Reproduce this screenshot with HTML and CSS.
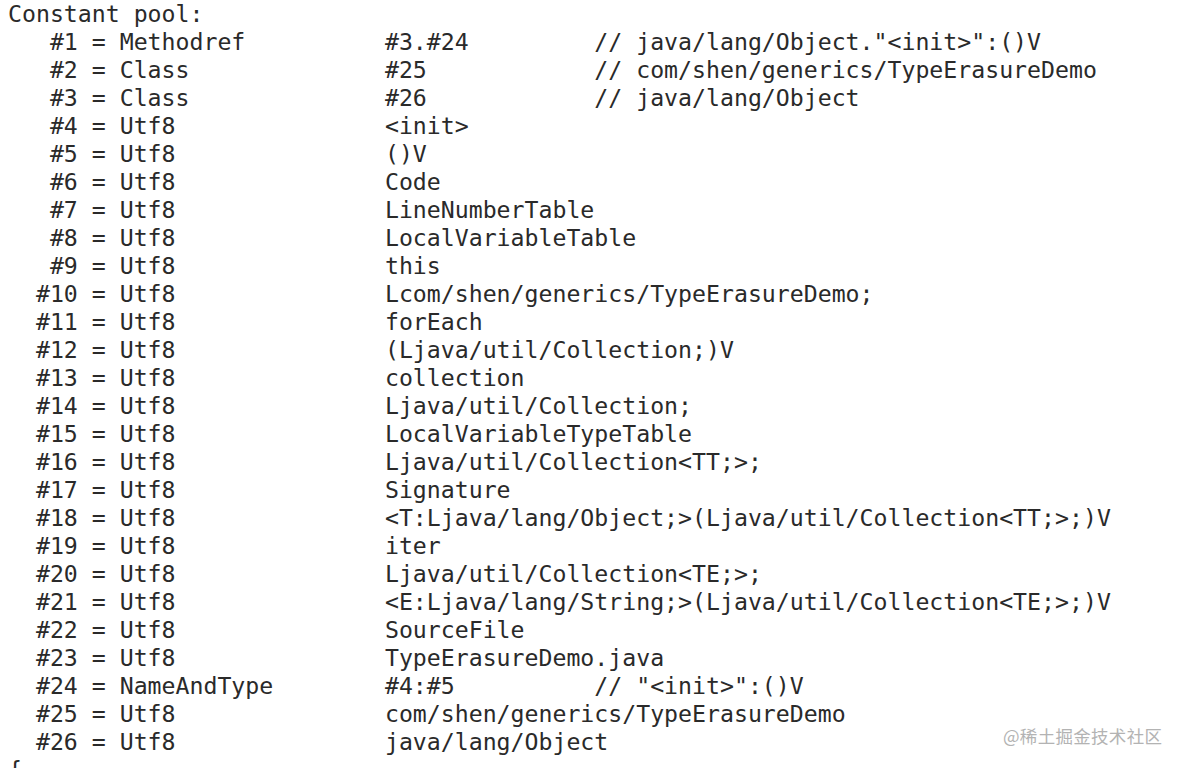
FILE: index.html
```html
<!DOCTYPE html>
<html lang="en">
<head>
<meta charset="utf-8">
<title>Constant pool</title>
<link rel="stylesheet" href="styles.css">
</head>
<body>
<main class="terminal">
<pre class="output">Constant pool:
   #1 = Methodref          #3.#24         // java/lang/Object."&lt;init&gt;":()V
   #2 = Class              #25            // com/shen/generics/TypeErasureDemo
   #3 = Class              #26            // java/lang/Object
   #4 = Utf8               &lt;init&gt;
   #5 = Utf8               ()V
   #6 = Utf8               Code
   #7 = Utf8               LineNumberTable
   #8 = Utf8               LocalVariableTable
   #9 = Utf8               this
  #10 = Utf8               Lcom/shen/generics/TypeErasureDemo;
  #11 = Utf8               forEach
  #12 = Utf8               (Ljava/util/Collection;)V
  #13 = Utf8               collection
  #14 = Utf8               Ljava/util/Collection;
  #15 = Utf8               LocalVariableTypeTable
  #16 = Utf8               Ljava/util/Collection&lt;TT;&gt;;
  #17 = Utf8               Signature
  #18 = Utf8               &lt;T:Ljava/lang/Object;&gt;(Ljava/util/Collection&lt;TT;&gt;;)V
  #19 = Utf8               iter
  #20 = Utf8               Ljava/util/Collection&lt;TE;&gt;;
  #21 = Utf8               &lt;E:Ljava/lang/String;&gt;(Ljava/util/Collection&lt;TE;&gt;;)V
  #22 = Utf8               SourceFile
  #23 = Utf8               TypeErasureDemo.java
  #24 = NameAndType        #4:#5          // "&lt;init&gt;":()V
  #25 = Utf8               com/shen/generics/TypeErasureDemo
  #26 = Utf8               java/lang/Object
{</pre>
<span class="watermark">@稀土掘金技术社区</span>
</main>
</body>
</html>
```

FILE: styles.css
```css
html, body {
  margin: 0;
  padding: 0;
  background: #ffffff;
}

body {
  width: 1186px;
  height: 768px;
  overflow: hidden;
}

.terminal {
  position: relative;
  width: 1186px;
  height: 768px;
  overflow: hidden;
}

.output {
  margin: 0;
  padding: 0 0 0 8px;
  font-family: "DejaVu Sans Mono", "Liberation Mono", monospace;
  font-size: 23.2px;
  line-height: 28px;
  color: #2a2a2a;
  white-space: pre;
}

.watermark {
  position: absolute;
  left: 1003px;
  top: 724px;
  font-family: "Noto Sans CJK SC", "Noto Sans", sans-serif;
  font-size: 17.5px;
  line-height: 24px;
  color: #b3b3b3;
  letter-spacing: 0.3px;
}
```
